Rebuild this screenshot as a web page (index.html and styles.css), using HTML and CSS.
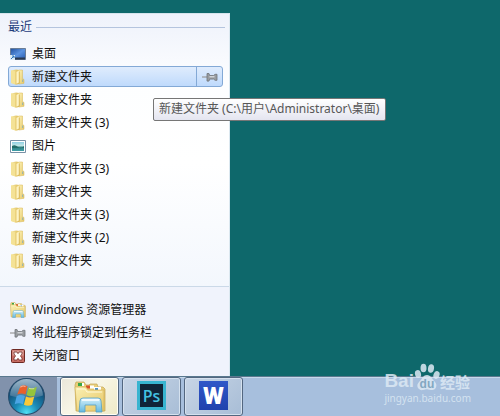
FILE: index.html
```html
<!DOCTYPE html>
<html lang="zh-CN">
<head>
<meta charset="utf-8">
<title>桌面</title>
<link rel="stylesheet" href="styles.css">
</head>
<body>
<svg class="defs" aria-hidden="true">
  <defs>
    <linearGradient id="gold" x1="0" x2="1" y1="0" y2="1"><stop offset="0" stop-color="#fbf0b4"/><stop offset="1" stop-color="#e6c765"/></linearGradient>
    <linearGradient id="goldDark" x1="0" x2="1"><stop offset="0" stop-color="#f8eaa6"/><stop offset="1" stop-color="#dcbc5c"/></linearGradient>
    <linearGradient id="sky" x1="0" x2="1" y1="0" y2="1"><stop offset="0" stop-color="#1f4f9e"/><stop offset=".5" stop-color="#5b93e0"/><stop offset="1" stop-color="#2659ac"/></linearGradient>
    <linearGradient id="sea" x1="0" x2="0" y1="0" y2="1"><stop offset="0" stop-color="#8ed0e4"/><stop offset=".45" stop-color="#c9e9e6"/><stop offset=".55" stop-color="#2f7f80"/><stop offset="1" stop-color="#3f9fa8"/></linearGradient>
    <linearGradient id="glass" x1="0" x2="0" y1="0" y2="1"><stop offset="0" stop-color="#d6f1fb"/><stop offset="1" stop-color="#62b7df"/></linearGradient>
    <linearGradient id="orbTop" x1="0" x2="0" y1="0" y2="1"><stop offset="0" stop-color="#b9cfdc"/><stop offset="1" stop-color="#3f7296"/></linearGradient>
    <radialGradient id="orb" cx=".5" cy=".95" r=".8"><stop offset="0" stop-color="#4fe0f4"/><stop offset=".4" stop-color="#1b8cb8"/><stop offset="1" stop-color="#123f68"/></radialGradient>
    <symbol id="folder" viewBox="0 0 16 16">
      <path d="M1 1.500 6 .5l3 .5v14l-3 .7-5-1.700z" fill="url(#goldDark)"/>
      <path d="M1 1.500 5.500 2.300v13L1 14z" fill="#f4e296"/>
      <path d="M5.500 2.300 9 .8v13l-3.500 1.500z" fill="#e8cb70"/>
      <path d="M6.500 3 9 1.500v12l-2.500 1z" fill="#fdf4c4"/>
      <path d="M9 1h3.500v8.500l1.500 1v3.800l-5 .7z" fill="url(#gold)"/>
      <path d="M9 1h3.500v8.500l1.500 1v3.800l-5 .7" fill="none" stroke="#d8b650" stroke-width=".5"/>
      <path d="M9.300 2.500v12" stroke="#d0a840" stroke-width=".7"/>
      <path d="M12.700 10.500v2.500" stroke="#8eb0b4"/>
    </symbol>
    <symbol id="explorer" viewBox="0 0 32 32">
      <path d="M1 4 2 1h8l2 3h3l1-1h7l1 3h5l2 2v22H2z" fill="#e9cf7a" stroke="#c2a555" stroke-width=".7"/>
      <path d="M4 2h4v3H4z" fill="#37a647"/><path d="M8 2h2v3H8z" fill="#fff"/>
      <path d="M12 4.500h4v3h-4z" fill="#d9512c"/><path d="M16 4.500h4v3h-4z" fill="#fff"/>
      <path d="M20 6h7v4h-7z" fill="#fff"/><path d="M21 7h3v2h-3z" fill="#4c94c8"/>
      <path d="M1 6h11l2 3h16v21H3z" fill="url(#gold)" stroke="#d0ac50" stroke-width=".6"/>
      <path d="M3 8h8l2 3h15" fill="none" stroke="#fff9d8"/>
      <path d="M5 31 6 20q0-3 3-3h15q3 0 3 3l1 11h-6v-7H11v7z" fill="url(#glass)" stroke="#559fc3" stroke-width=".8"/>
      <path d="M8 19h17" stroke="#fff" stroke-width="1.5"/>
    </symbol>
    <symbol id="pin" viewBox="0 0 16 16">
      <path d="M0 8h5" stroke="#999" stroke-width="1.2"/>
      <path d="M5 4.500h2l.7 2h4l1.300-1.200h2v6h-2l-1.300-1.200h-4l-.7 2H5z" fill="#989ca0" stroke="#707478" stroke-width=".8"/>
      <path d="M7.500 7.800h5" stroke="#e9ebed"/>
    </symbol>
  </defs>
</svg>

<main class="desktop">
  <nav class="jump-list" aria-label="跳转列表">
    <section class="recent">
      <h2 class="heading">最近</h2>
      <ul class="items">
        <li class="item"><button class="entry"><svg class="icon" viewBox="0 0 16 16"><path d="M.5 2.500h15v11H.5z" fill="url(#sky)" stroke="#6a7d96"/><path d="M1 11.500h14v2H1z" fill="#29394f"/><path d="M0 9h5v5H0z" fill="#dcecf8"/><path d="m1 13 3-3M2 10h2v2" fill="none" stroke="#2d74b8"/></svg>桌面</button></li>
        <li class="item selected"><button class="entry"><svg class="icon"><use href="#folder"/></svg>新建文件夹</button><button class="pin" aria-label="锁定到此列表"><svg class="icon"><use href="#pin"/></svg></button>
          <div class="tooltip" role="tooltip">新建文件夹 (C:\用户\Administrator\桌面)</div></li>
        <li class="item"><button class="entry"><svg class="icon"><use href="#folder"/></svg>新建文件夹</button></li>
        <li class="item"><button class="entry"><svg class="icon"><use href="#folder"/></svg>新建文件夹 (3)</button></li>
        <li class="item"><button class="entry"><svg class="icon" viewBox="0 0 16 16"><path d="M.5 2.500h15v12H.5z" fill="#fff" stroke="#7891a6"/><path d="M2 4h12v9H2z" fill="url(#sea)"/><path d="M2 8q3-2 6 1t6-1v2H2z" fill="#226c68"/></svg>图片</button></li>
        <li class="item"><button class="entry"><svg class="icon"><use href="#folder"/></svg>新建文件夹 (3)</button></li>
        <li class="item"><button class="entry"><svg class="icon"><use href="#folder"/></svg>新建文件夹</button></li>
        <li class="item"><button class="entry"><svg class="icon"><use href="#folder"/></svg>新建文件夹 (3)</button></li>
        <li class="item"><button class="entry"><svg class="icon"><use href="#folder"/></svg>新建文件夹 (2)</button></li>
        <li class="item"><button class="entry"><svg class="icon"><use href="#folder"/></svg>新建文件夹</button></li>
      </ul>
    </section>
    <ul class="items tasks">
      <li class="item"><button class="entry"><svg class="icon"><use href="#explorer"/></svg>Windows 资源管理器</button></li>
      <li class="item"><button class="entry"><svg class="icon"><use href="#pin"/></svg>将此程序锁定到任务栏</button></li>
      <li class="item"><button class="entry"><svg class="icon" viewBox="0 0 16 16"><rect x="1.500" y="1.500" width="13" height="13" rx="1" fill="#c76d64" stroke="#6d2822"/><path d="M2.500 2.500h11v5h-11z" fill="#dda49c"/><path d="M4 4h3l1 1.700L9 4h3v2l-1.500 2 1.500 2v2H9L8 10.300 7 12H4v-2l1.500-2L4 6z" fill="#fff" stroke="#742f2a" stroke-width=".8"/></svg>关闭窗口</button></li>
    </ul>
  </nav>
</main>

<footer class="taskbar">
  <div class="start-area"><button class="start" aria-label="开始">
    <svg class="orb" viewBox="0 0 36 36"><circle cx="18" cy="18" r="17.500" fill="url(#orb)" stroke="#284d6c"/><path d="M2 17a16 16 0 0 1 32 0q-16 6-32 0" fill="url(#orbTop)" opacity=".85"/>
      <path d="M12 8q3-2 7 0l-2 8q-4-2-8 0z" fill="#e9602b"/><path d="M20 9q4 2 8-.5L26 17q-4 2-8-.5z" fill="#96c43c"/><path d="M8.500 17.500q4-2 8 0l-2 8q-4-2-8 0z" fill="#4ba5e4"/><path d="M17.500 18q4 2 8 0l-2 8q-4 2-8 0z" fill="#fac939"/><path d="M12 9q3-2 5-.5M20.500 10q3 1 5 .2" fill="none" stroke="#fff" opacity=".5"/></svg>
  </button></div>
  <button class="task active" aria-label="Windows 资源管理器"><svg class="app" viewBox="0 0 32 32"><use href="#explorer"/></svg></button>
  <button class="task" aria-label="Photoshop"><span class="tile ps">Ps</span></button>
  <button class="task" aria-label="WPS 文字"><span class="tile wps">W</span></button>
</footer>

<div class="watermark">
  <div class="brand"><span>Bai</span><span class="paw"><svg class="paw-shape" viewBox="0 0 26 28"><ellipse cx="4" cy="11" rx="3" ry="4" transform="rotate(-15 4 11)"/><ellipse cx="9.500" cy="5" rx="3" ry="4.300"/><ellipse cx="17" cy="5.500" rx="3" ry="4.300" transform="rotate(10 17 5.500)"/><ellipse cx="22.500" cy="12" rx="3" ry="4" transform="rotate(20 22.500 12)"/><path d="M13 12c4 0 5 4 8 7s1 9-4 8-4-1-8 0-8-4-4-8 4-7 8-7"/></svg><span class="du">du</span></span><span class="suffix">经验</span></div>
  <div class="site">jingyan.baidu.com</div>
</div>
</body>
</html>
```

FILE: styles.css
```css
* { box-sizing: border-box; }

body {
  margin: 0;
  min-height: 100vh;
  display: flex;
  flex-direction: column;
  position: relative;
  background: #0e686b;
  font: 12px/16px "Noto Sans", "Noto Sans CJK SC", sans-serif;
  color: #111;
}

button {
  margin: 0;
  padding: 0;
  border: 0;
  background: none;
  font: inherit;
  color: inherit;
}

.defs { position: absolute; width: 0; height: 0; }

.desktop {
  flex: 1;
  display: flex;
  align-items: flex-end;
}

.jump-list {
  width: 46%;
  min-width: 229px;
  max-width: 240px;
  background: #f0f3fc;
  border-top: 1px solid #d5e4ec;
  border-right: 1px solid #dbe8f0;
}

.recent {
  padding: 5px 4px 14px 8px;
  background: linear-gradient(#eef2fb, #fdfeff 25%, #fff 55%, #f3f7fd);
  border-bottom: 1px solid #cbd9e8;
}

.heading {
  display: flex;
  align-items: center;
  gap: 4px;
  margin: 0 0 7px;
  font-size: 12px;
  font-weight: 400;
  color: #1e3c7b;
}

.heading::after {
  content: "";
  flex: 1;
  height: 1px;
  background: #b4c4de;
}

.items { margin: 0; padding: 0; list-style: none; }

.recent .items { padding-right: 2px; }

.item {
  display: flex;
  height: 23px;
  position: relative;
}

.entry {
  flex: 1;
  display: flex;
  align-items: center;
  gap: 6px;
  padding-left: 2px;
  text-align: left;
  white-space: nowrap;
}

.icon { width: 16px; height: 16px; flex: none; }

.selected::before {
  content: "";
  position: absolute;
  inset: 1px 0;
  border: 1px solid #83a9d6;
  border-radius: 3px;
  background: linear-gradient(#dfecfd, #bfdafc);
}

.selected .entry, .selected .pin { position: relative; }

.pin {
  width: 27px;
  margin: 1px 0;
  display: grid;
  place-items: center;
  border-left: 1px solid #83a9d6;
}

.tooltip {
  position: absolute;
  z-index: 2;
  top: 33px;
  left: 145px;
  padding: 2px 6px 3px 5px;
  border: 1px solid #767676;
  border-radius: 2px;
  background: linear-gradient(#fff, #e4e5f0);
  color: #575757;
  white-space: nowrap;
}

.tasks { padding: 11px 6px 9px 8px; }

.taskbar {
  height: 40px;
  display: flex;
  gap: 3px;
  background: #a7bfdd;
  border-top: 1px solid #59788e;
  box-shadow: inset 0 1px #c7d8ea;
}

.start-area {
  width: 57px;
  padding-left: 8px;
  display: flex;
  align-items: center;
  background: #8192ac;
}

.start { display: grid; }

.orb { width: 37px; height: 37px; }

.task {
  width: 59px;
  padding-bottom: 2px;
  display: grid;
  place-items: center;
  border: 1px solid #536780;
  border-radius: 3px;
  background: linear-gradient(135deg, #c7d5e6, #a8bdd6);
  box-shadow: inset 0 0 0 1px #d5e1ee;
}

.active {
  padding-bottom: 0;
  background: linear-gradient(135deg, #e9e6da, #f8f6e6 45%, #efeac6);
  box-shadow: inset 0 0 0 1px #fffef5;
}

.app { width: 34px; height: 32px; }

.tile {
  width: 29px;
  height: 29px;
  display: grid;
  place-items: center;
  color: #fff;
}

.ps {
  border: 3px solid #38b4d0;
  background: #102438;
  color: #43c2e2;
  font: 600 16px/20px "Open Sans", sans-serif;
}

.wps {
  background: linear-gradient(#3057c8, #2042ad);
  font: 900 24px/28px Roboto, sans-serif;
}

.watermark {
  position: absolute;
  right: 29px;
  bottom: 11px;
  color: #dce9f4;
  opacity: .85;
}

.brand {
  display: flex;
  align-items: flex-end;
  font: 700 19px/20px "Liberation Sans", sans-serif;
}

.paw { position: relative; display: grid; }

.paw-shape { width: 26px; height: 28px; fill: #dce9f4; }

.du {
  position: absolute;
  inset: auto 0 0;
  text-align: center;
  font-size: 12px;
  line-height: 14px;
  color: #7ca4bd;
}

.suffix { font: 700 15px/19px "Noto Sans CJK SC", sans-serif; }

.site { font: 10px/14px "Noto Sans", sans-serif; }
```
